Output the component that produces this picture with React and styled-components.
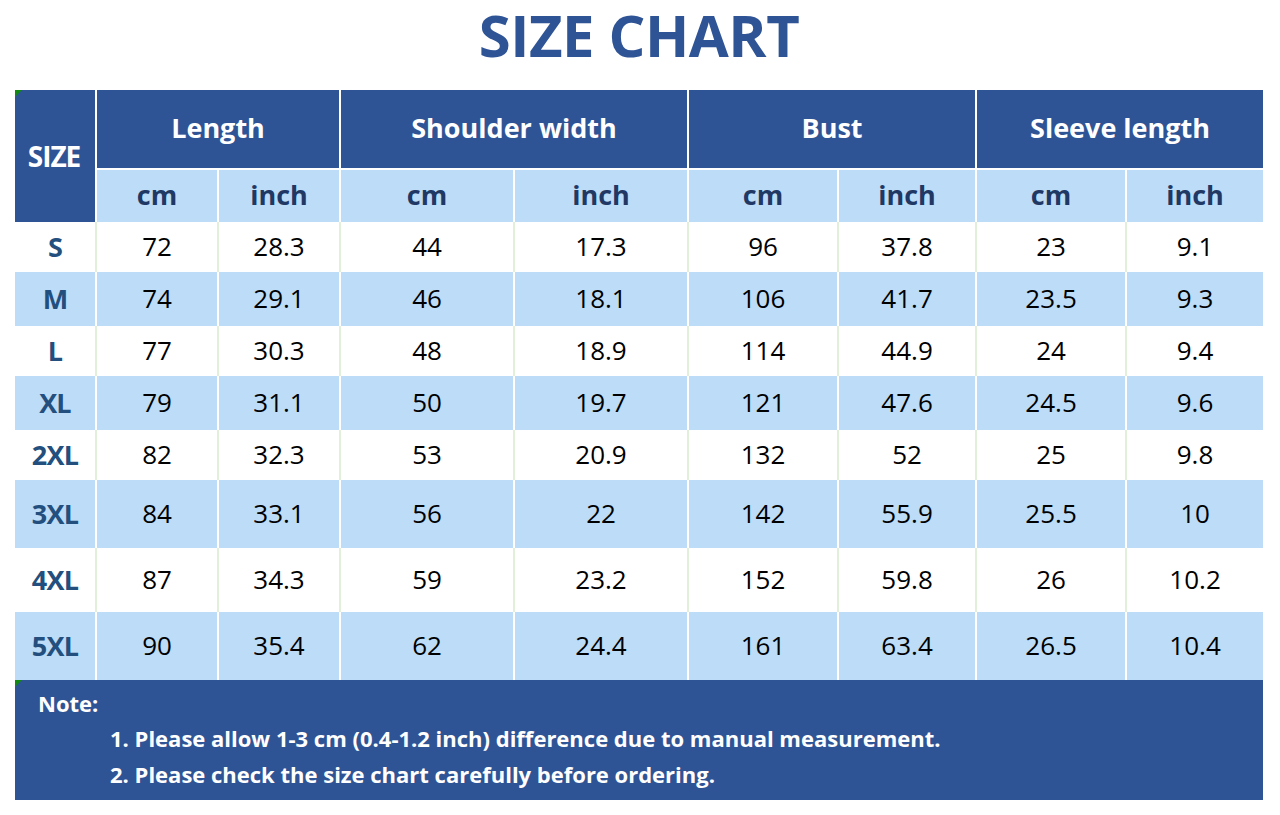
import React from "react";
import styled, { createGlobalStyle } from "styled-components";

const Global = createGlobalStyle`
  html, body { margin: 0; padding: 0; background: #ffffff; }
  body { font-family: "Open Sans", "Noto Sans", "Liberation Sans", sans-serif; }
`;

const DARK = "#2f5496";
const LIGHT = "#bddcf8";
const GREENLINE = "#e2efda";

const Page = styled.div`
  width: 1280px;
  height: 815px;
  padding: 0 17px 0 15px;
  box-sizing: border-box;
  display: flex;
  flex-direction: column;
`;

const Title = styled.h1`
  margin: 0;
  height: 90px;
  display: flex;
  align-items: center;
  justify-content: center;
  box-sizing: border-box;
  font-size: 58px;
  line-height: 1;
  font-weight: 700;
  color: ${DARK};
  letter-spacing: -0.5px;
  padding-bottom: 20px;
`;

const Table = styled.table`
  border-collapse: separate;
  border-spacing: 0;
  table-layout: fixed;
  width: 1248px;
`;

const Th = styled.th`
  padding: 0 0 ${(p) => (p.$sub ? "3px" : "4px")} 0;
  background: ${(p) => (p.$sub ? LIGHT : DARK)};
  color: ${(p) => (p.$sub ? "#1f3864" : "#ffffff")};
  font-weight: 700;
  font-size: 27px;
  height: ${(p) => p.$h}px;
  box-sizing: border-box;
  border-left: ${(p) => (p.$first ? "0" : "2px solid #ffffff")};
  border-top: ${(p) => (p.$sub ? "2px solid #ffffff" : "0")};
  text-align: center;
  vertical-align: middle;
  position: relative;
  line-height: 1;
`;

const SizeHead = styled(Th)`
  font-size: 28px;
  letter-spacing: -1px;
  padding: 0 2px 0 0;
`;

const Td = styled.td`
  padding: 0 0 2px 0;
  height: ${(p) => p.$h}px;
  box-sizing: border-box;
  background: ${(p) => (p.$alt ? LIGHT : "#ffffff")};
  border-left: ${(p) =>
    p.$first ? "0" : `2px solid ${p.$alt ? "#ffffff" : GREENLINE}`};
  text-align: center;
  vertical-align: middle;
  font-size: 26px;
  font-weight: 400;
  color: #000000;
  line-height: 1;
`;

const SizeCell = styled(Td)`
  font-weight: 700;
  font-size: 27px;
  color: #234f7e;
  letter-spacing: -0.8px;
`;

const Triangle = styled.span`
  position: absolute;
  left: 0;
  top: 0;
  width: 0;
  height: 0;
  border-top: 7px solid #128a12;
  border-right: 7px solid transparent;
`;

const Note = styled.div`
  position: relative;
  width: 1248px;
  height: 120px;
  background: ${DARK};
  color: #ffffff;
  box-sizing: border-box;
  padding: 8px 0 0 23px;
  display: flex;
  flex-direction: column;
  font-weight: 700;
  font-size: 22px;
`;

const NoteTitle = styled.div`
  height: 32px;
  line-height: 30px;
`;

const NoteLine = styled.div`
  padding-left: 72px;
  height: 36px;
  line-height: 36px;
`;

const widths = [80, 122, 122, 174, 174, 150, 138, 150, 138];

const rows = [
  ["S", 72, 28.3, 44, 17.3, 96, 37.8, 23, 9.1, 50],
  ["M", 74, 29.1, 46, 18.1, 106, 41.7, 23.5, 9.3, 54],
  ["L", 77, 30.3, 48, 18.9, 114, 44.9, 24, 9.4, 50],
  ["XL", 79, 31.1, 50, 19.7, 121, 47.6, 24.5, 9.6, 54],
  ["2XL", 82, 32.3, 53, 20.9, 132, 52, 25, 9.8, 50],
  ["3XL", 84, 33.1, 56, 22, 142, 55.9, 25.5, 10, 68],
  ["4XL", 87, 34.3, 59, 23.2, 152, 59.8, 26, 10.2, 64],
  ["5XL", 90, 35.4, 62, 24.4, 161, 63.4, 26.5, 10.4, 68],
];

const groups = ["Length", "Shoulder width", "Bust", "Sleeve length"];

export default function App() {
  return (
    <>
      <Global />
      <Page>
        <Title>SIZE CHART</Title>
        <Table>
          <colgroup>
            {widths.map((w, i) => (
              <col key={i} style={{ width: w }} />
            ))}
          </colgroup>
          <thead>
            <tr>
              <SizeHead rowSpan={2} $first $h={132}>
                <Triangle />
                SIZE
              </SizeHead>
              {groups.map((g) => (
                <Th key={g} colSpan={2} $h={78}>
                  {g}
                </Th>
              ))}
            </tr>
            <tr>
              {groups.flatMap((g) => [
                <Th key={g + "cm"} $sub $h={54}>
                  cm
                </Th>,
                <Th key={g + "in"} $sub $h={54}>
                  inch
                </Th>,
              ])}
            </tr>
          </thead>
          <tbody>
            {rows.map((r, ri) => {
              const alt = ri % 2 === 1;
              const h = r[9];
              return (
                <tr key={r[0]}>
                  <SizeCell $first $alt={alt} $h={h}>
                    {r[0]}
                  </SizeCell>
                  {r.slice(1, 9).map((v, ci) => (
                    <Td key={ci} $alt={alt} $h={h}>
                      {v}
                    </Td>
                  ))}
                </tr>
              );
            })}
          </tbody>
        </Table>
        <Note>
          <Triangle />
          <NoteTitle>Note:</NoteTitle>
          <NoteLine>
            1. Please allow 1-3 cm (0.4-1.2 inch) difference due to manual
            measurement.
          </NoteLine>
          <NoteLine>2. Please check the size chart carefully before ordering.</NoteLine>
        </Note>
      </Page>
    </>
  );
}
